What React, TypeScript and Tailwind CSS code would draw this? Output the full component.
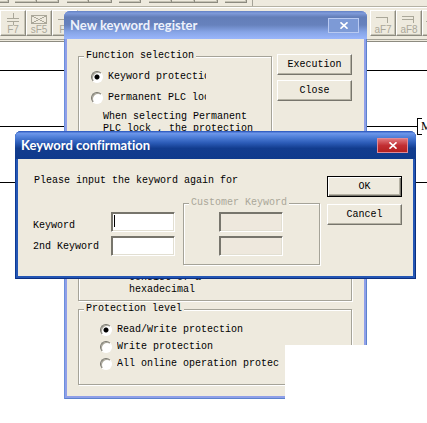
import React from "react";
import clsx from "clsx";

const topButtons = [
  "w-[9px] mr-[6px]",
  "w-[22px]",
  "w-[22px] mr-[8px]",
  "w-[22px]",
  "w-[23px] mr-[7px]",
  "w-[22px] mr-[8px]",
  "w-[23px]",
  "w-[23px]",
  "w-[23px] mr-[7px]",
  "w-[22px] mr-[5px]",
];

const levels = ["Read/Write protection", "Write protection", "All online operation protec"];

function ToolButton({ label, children }: { label?: string; children: React.ReactNode }) {
  return (
    <button className="flex h-[26px] w-[26px] shrink-0 flex-col items-center overflow-hidden border border-t-white border-l-white border-r-[#8d8b80] border-b-[#8d8b80] bg-[#eeeade] pt-[2px] font-['Liberation_Sans',sans-serif] text-[10px] leading-[10px] text-[#aaa799] shadow-[inset_-1px_-1px_0_#c5c2b4]">
      <svg className="h-[12px] w-[20px] shrink-0" viewBox="0 0 20 12" fill="none" stroke="#aaa799" shapeRendering="crispEdges">
        {children}
      </svg>
      {label}
    </button>
  );
}

function PushButton({ children, isDefault }: { children: React.ReactNode; isDefault?: boolean }) {
  return (
    <button
      className={clsx(
        "h-[21px] w-[75px] border bg-[#eeeade] text-center",
        isDefault
          ? "border-black shadow-[inset_1px_1px_0_#fff,inset_-1px_-1px_0_#77756c,inset_-2px_-2px_0_#b5b2a4]"
          : "border-t-white border-l-white border-r-[#77756c] border-b-[#77756c] shadow-[inset_-1px_-1px_0_#b5b2a4]"
      )}
    >
      {children}
    </button>
  );
}

function Group({ title, className, disabled, children }: { title?: string; className?: string; disabled?: boolean; children: React.ReactNode }) {
  return (
    <fieldset
      disabled={disabled}
      className={clsx("min-w-0 border border-[#a5a398] shadow-[1px_1px_0_#fff,inset_1px_1px_0_#fff]", className)}
    >
      {title && (
        <legend className={clsx("ml-[5px] bg-[#eeeade] px-[2px]", disabled && "text-[#aaa799]")}>{title}</legend>
      )}
      {children}
    </fieldset>
  );
}

function Radio({ name, label, checked, className }: { name: string; label: string; checked?: boolean; className?: string }) {
  return (
    <label className={clsx("flex items-center gap-[5px]", className)}>
      <input
        type="radio"
        name={name}
        defaultChecked={checked}
        className="h-[12px] w-[12px] shrink-0 appearance-none rounded-full border border-t-[#77756c] border-l-[#77756c] border-r-white border-b-white bg-white shadow-[inset_1px_1px_0_#aaa799] checked:bg-[radial-gradient(circle,#000_2px,#fff_3px)]"
      />
      <span className="overflow-hidden whitespace-nowrap">{label}</span>
    </label>
  );
}

function TextBox({ label }: { label: string }) {
  return (
    <input
      id={label}
      type="text"
      aria-label={label}
      className="block h-[20px] w-[64px] border border-t-[#77756c] border-l-[#77756c] border-r-white border-b-white bg-white px-[2px] shadow-[inset_1px_1px_0_#77756c,inset_-1px_-1px_0_#e2dfd2] outline-none disabled:bg-[#eee8dd]"
    />
  );
}

function CloseButton({ className }: { className: string }) {
  return (
    <button aria-label="Close window" className={clsx("flex h-[15px] w-[31px] items-center justify-center border", className)}>
      <svg className="h-[7px] w-[8px]" viewBox="0 0 8 7" stroke="#fff" strokeWidth="1.6">
        <path d="M0.5 0.3L7.5 6.7M7.5 0.3L0.5 6.7" />
      </svg>
    </button>
  );
}

export default function App() {
  return (
    <div className="relative flex min-h-screen flex-col overflow-hidden bg-white font-['Liberation_Mono','DejaVu_Sans_Mono',monospace] text-[10px] leading-[12px] text-black">
      {/* Toolbars */}
      <div className="border-b border-[#8d8b80] bg-[#eeeade]">
        <div className="flex h-[7px] border-b border-[#b5b2a4]">
          {topButtons.map((size, i) => (
            <button
              key={i}
              aria-label={`Tool ${i + 1}`}
              className={clsx("h-[3px] shrink-0 border-r border-b border-[#8d8b80] shadow-[inset_-1px_-1px_0_#c5c2b4]", size)}
            />
          ))}
          <div className="w-px bg-[#a5a398]" />
        </div>
        <div className="flex border-t border-white pt-[2px] pb-[3px]">
          <ToolButton label="F7">
            <path d="M10 0V5M4 5.5H16M4 8.5H16M10 9V12" />
          </ToolButton>
          <ToolButton label="sF5">
            <path d="M2.5 2.5H17.5V10.5H2.5ZM2.5 2.5L17.5 10.5M17.5 2.5L2.5 10.5" />
          </ToolButton>
          <ToolButton label="F8">
            <path d="M3 6.5H17" />
          </ToolButton>
          <div className="w-[292px] shrink-0" />
          <ToolButton label="aF7">
            <path d="M3 4.5H14.5V10" />
          </ToolButton>
          <ToolButton label="aF8">
            <path d="M3 3.5H14.5V10M3 6.5H14" />
          </ToolButton>
          <ToolButton>
            <path d="M1 8.5H17" />
          </ToolButton>
        </div>
        <div className="h-[2px] border-t border-[#a5a398]" />
      </div>

      {/* Ladder canvas */}
      <main className="flex-1">
        <svg className="h-[160px] w-full" stroke="#000" fill="none" shapeRendering="crispEdges">
          <path d="M0 28.5H2000M0 84.5H417M0 140.5H2000M422 76.5H417.5V92.5H422" />
          <text x="421" y="88" stroke="none" fill="#000" className="font-['Liberation_Serif',serif] text-[12px]">
            M
          </text>
        </svg>
      </main>

      {/* New keyword register */}
      <section className="absolute top-[11px] left-[64px] w-[303px] rounded-t-[6px] bg-[#8f9fe8] pb-[3px] shadow-[inset_1px_0_0_#6b8fdc,inset_-1px_-1px_0_#5c82cc]">
        <header className="flex h-[28px] items-center justify-between rounded-t-[6px] bg-[linear-gradient(#6280c4_0%,#7f9bda_8%,#637eb8_22%,#6782bd_50%,#86a4e6_75%,#9ab6fb_100%)] pr-[8px] pl-[6px]">
          <h2 className="font-['Lato',sans-serif] text-[13px] font-bold text-[#eef2fc] [font-variant-ligatures:none]">New keyword register</h2>
          <CloseButton className="border-[#b9caf2] bg-[#7d9ad6]" />
        </header>
        <div className="mx-[3px] bg-[#eeeade] pt-[11px] pr-[12px] pb-[11px] pl-[11px]">
          <div className="flex gap-[5px]">
            <Group title="Function selection" className="h-[100px] flex-1">
              <div className="pt-[4px] pl-[12px]">
                <Radio name="function" label="Keyword protection" checked className="h-[21px] w-[115px]" />
                <Radio name="function" label="Permanent PLC lock" className="h-[21px] w-[115px]" />
                <p className="mt-[3px] ml-[12px] whitespace-pre">{"When selecting Permanent\nPLC lock , the protection"}</p>
              </div>
            </Group>
            <div className="flex flex-col gap-[5px] pt-[4px]">
              <PushButton>Execution</PushButton>
              <PushButton>Close</PushButton>
            </div>
          </div>
          <Group className="mt-[2px] flex h-[149px] flex-col justify-end pb-[4px] pl-[50px]">
            <p className="whitespace-pre">{"Consist of a\nhexadecimal"}</p>
          </Group>
          <Group title="Protection level" className="mt-[2px] h-[82px]">
            <div className="pt-[6px] pl-[21px]">
              {levels.map((level, i) => (
                <Radio key={level} name="level" label={level} checked={i === 0} className="h-[17px]" />
              ))}
            </div>
          </Group>
        </div>
      </section>

      {/* Blank panel over the window corner */}
      <div className="absolute top-[345px] right-0 bottom-0 left-[285px] bg-white" />

      {/* Keyword confirmation */}
      <section className="absolute top-[131px] left-[15px] w-[401px] rounded-t-[6px] bg-[#2456b4] pb-[3px] shadow-[inset_1px_0_0_#0d3a94,inset_-1px_-1px_0_#0b2f80]">
        <header className="flex h-[28px] items-center justify-between rounded-t-[6px] bg-[linear-gradient(#2450b8_0%,#6d97ea_8%,#4f7fd8_22%,#2c5cb8_42%,#123c8e_62%,#0f3a8c_100%)] pr-[8px] pl-[6px]">
          <h2 className="font-['Lato',sans-serif] text-[13px] font-bold text-white [font-variant-ligatures:none]">Keyword confirmation</h2>
          <CloseButton className="border-[#e08a96] bg-[linear-gradient(#e0757a,#c22f33_50%,#b3201f)]" />
        </header>
        <div className="mx-[3px] flex justify-between bg-[#eeeade] pt-[16px] pr-[11px] pb-[11px] pl-[15px]">
          <div>
            <p className="pl-px">Please input the keyword again for</p>
            <div className="mt-[10px] flex">
              <div className="flex w-[78px] flex-col gap-[9px] pt-[23px]">
                <label htmlFor="Keyword">Keyword</label>
                <label htmlFor="2nd Keyword">2nd Keyword</label>
              </div>
              <div className="relative mr-[8px] flex flex-col gap-[4px] pt-[15px]">
                <TextBox label="Keyword" />
                <TextBox label="2nd Keyword" />
                <span className="absolute top-[18px] left-[3px] h-[12px] w-px bg-black" />
              </div>
              <Group title="Customer Keyword" disabled className="w-[137px]">
                <div className="flex flex-col gap-[4px] pt-[3px] pb-[8px] pl-[35px]">
                  <TextBox label="Customer keyword" />
                  <TextBox label="2nd customer keyword" />
                </div>
              </Group>
            </div>
          </div>
          <div className="flex flex-col gap-[7px] pt-px">
            <PushButton isDefault>OK</PushButton>
            <PushButton>Cancel</PushButton>
          </div>
        </div>
      </section>
    </div>
  );
}
